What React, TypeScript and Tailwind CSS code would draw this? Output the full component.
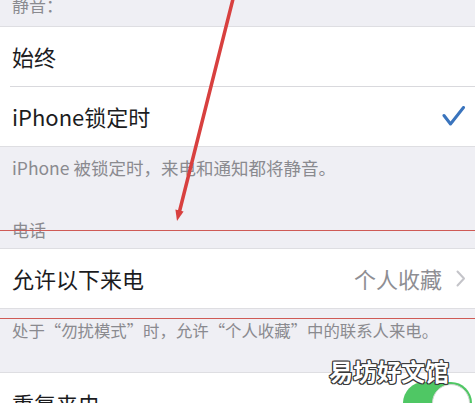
import React from "react";

const font = { fontFamily: '"Noto Sans CJK SC", "Noto Sans", sans-serif' };

function Check() {
  return (
    <svg width="24" height="22" viewBox="0 0 24 22" fill="none">
      <path d="M2 9.5 L8.5 18 L21.5 1.5" stroke="#3a74bd" strokeWidth="3" strokeLinecap="round" strokeLinejoin="round" />
    </svg>
  );
}

function Chevron() {
  return (
    <svg width="10" height="17" viewBox="0 0 10 17" fill="none">
      <path d="M1.5 1.5 L8 8.5 L1.5 15.5" stroke="#c4c4c9" strokeWidth="2" strokeLinecap="round" strokeLinejoin="round" />
    </svg>
  );
}

function Toggle() {
  return (
    <div className="relative h-[42px] w-[69px] rounded-full bg-[#4fc764]">
      <div className="absolute right-[2px] top-[2px] h-[38px] w-[38px] rounded-full border border-[#cfd6d0] bg-white" />
    </div>
  );
}

export default function App() {
  return (
    <div className="relative h-[403px] w-[475px] overflow-hidden bg-[#efeff4]" style={font}>
      {/* 静音 */}
      <div className="flex h-[26px] items-end px-3 pb-[13px] text-[17px] leading-none text-[#8a8a8f]">静音：</div>

      <div className="border-y border-[#dedee2] bg-white">
        <div className="flex h-[59px] items-center px-3 text-[22px] text-[#1c1c1e]">始终</div>
        <div className="ml-[10px] h-px bg-[#d9d9dd]" />
        <div className="flex h-[59px] items-center justify-between pl-3 pr-[9px] text-[22px] text-[#1c1c1e]">
          <span>iPhone锁定时</span>
          <Check />
        </div>
      </div>

      <div className="px-3 pt-[10px] text-[17.5px] leading-[22px] text-[#8a8a8f]">
        iPhone 被锁定时，来电和通知都将静音。
      </div>

      {/* 电话 */}
      <div className="px-3 pb-[7px] pt-[40px] text-[17px] leading-[22px] text-[#8a8a8f]">电话</div>

      <div className="border-y border-[#dedee2] bg-white">
        <div className="flex h-[59px] items-center justify-between pl-3 pr-[9px] text-[22px]">
          <span className="text-[#1c1c1e]">允许以下来电</span>
          <div className="flex items-center gap-[14px] text-[#8e8e93]">
            <span>个人收藏</span>
            <Chevron />
          </div>
        </div>
      </div>

      <div className="px-3 pb-[31px] pt-[10px] text-[16.4px] leading-[22px] text-[#8a8a8f]">
        处于“勿扰模式”时，允许“个人收藏”中的联系人来电。
      </div>

      <div className="border-t border-[#dedee2] bg-white">
        <div className="flex h-[60px] items-center justify-between pl-3 pr-[3px] text-[22px] text-[#1c1c1e]">
          <span>重复来电</span>
          <Toggle />
        </div>
      </div>

      {/* annotation: red box lines */}
      <div className="pointer-events-none absolute left-0 right-0 top-[230px] h-[89px] border-y-[1.5px] border-[#cf5a55]" />

      {/* annotation: red arrow */}
      <svg className="pointer-events-none absolute left-0 top-0" width="475" height="403" viewBox="0 0 475 403">
        <line x1="233.5" y1="-3" x2="179.6" y2="211" stroke="#d8403f" strokeWidth="3.5" strokeLinecap="round" />
        <polygon points="177,221 183.6,211.5 175.4,209.4" fill="#d8403f" />
      </svg>

      {/* watermark */}
      <div
        className="absolute left-[329px] top-[355px] text-[24px] font-bold leading-[32px] text-white [text-shadow:1px_1px_0_#3a3a3a,-1px_-1px_0_#3a3a3a,1px_-1px_0_#3a3a3a,-1px_1px_0_#3a3a3a,0_1px_0_#3a3a3a,0_-1px_0_#3a3a3a,1px_0_0_#3a3a3a,-1px_0_0_#3a3a3a]"
      >
        易坊好文馆
      </div>
    </div>
  );
}
